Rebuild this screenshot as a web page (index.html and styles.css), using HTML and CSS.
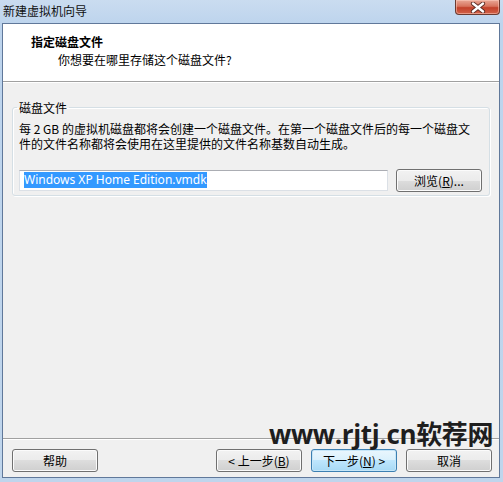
FILE: index.html
```html
<!DOCTYPE html>
<html lang="zh-CN">
<head>
<meta charset="utf-8">
<title>新建虚拟机向导</title>
<link rel="stylesheet" href="styles.css">
</head>
<body>
<div class="window">
  <div class="titlebar">
    <span class="title">新建虚拟机向导</span>
    <div class="close">
      <svg width="16" height="11" viewBox="0 0 16 11">
        <path d="M3 1.5 L13 9.5 M13 1.5 L3 9.5" stroke="#5a2a22" stroke-width="4.2" stroke-linecap="round"/>
        <path d="M3 1.5 L13 9.5 M13 1.5 L3 9.5" stroke="#ffffff" stroke-width="2.4" stroke-linecap="round"/>
      </svg>
    </div>
  </div>
  <div class="client">
    <div class="header">
      <div class="h-title">指定磁盘文件</div>
      <div class="h-sub">你想要在哪里存储这个磁盘文件?</div>
    </div>
    <div class="sep"></div>
    <div class="main">
      <fieldset class="group">
        <legend>磁盘文件</legend>
        <p class="desc"><span class="line">每 2 GB 的虚拟机磁盘都将会创建一个磁盘文件。在第一个磁盘文件后的每一个磁盘文</span><span class="line">件的文件名称都将会使用在这里提供的文件名称基数自动生成。</span></p>
        <div class="file-row">
          <div class="textbox"><span class="sel">Windows XP Home Edition.vmdk</span></div>
          <div class="btn">浏览(<u>R</u>)...</div>
        </div>
      </fieldset>
    </div>
    <div class="sep"></div>
    <div class="footer">
      <div class="btn">帮助</div>
      <div class="spacer"></div>
      <div class="btn">&lt; 上一步(<u>B</u>)</div>
      <div class="btn default">下一步(<u>N</u>) &gt;</div>
      <div class="btn">取消</div>
    </div>
  </div>
  <div class="watermark">www.rjtj.cn软荐网</div>
</div>
</body>
</html>
```
FILE: styles.css
```css
html, body {
  margin: 0;
  padding: 0;
}
body {
  width: 503px;
  height: 482px;
  overflow: hidden;
  background: #bfd5ec;
  font-family: "Noto Sans CJK SC", "Noto Sans", sans-serif;
  font-size: 12px;
  color: #000;
}
.window {
  position: relative;
  width: 503px;
  height: 482px;
  display: flex;
  flex-direction: column;
  background: linear-gradient(#cadcf0 0px, #bdd4ed 24px, #bfd5ec 100%);
}
.titlebar {
  height: 23px;
  display: flex;
  justify-content: space-between;
  align-items: flex-start;
  padding-left: 3px;
}
.title {
  line-height: 22px;
  font-size: 12px;
  color: #111;
}
.close {
  width: 43px;
  height: 14px;
  margin-right: 3px;
  border: 1px solid #6b3a30;
  border-top: none;
  border-radius: 0 0 4px 4px;
  background: linear-gradient(#e9a896 0%, #d7735d 45%, #c2412a 55%, #d26249 100%);
  box-shadow: inset 0 0 0 1px rgba(255, 210, 195, 0.5);
  display: flex;
  align-items: center;
  justify-content: center;
}
.close svg {
  display: block;
}
.client {
  flex: 1;
  margin: 0 3px 4px 2px;
  border: 1px solid #60789a;
  background: #f0f0f0;
  display: flex;
  flex-direction: column;
}
.header {
  height: 57px;
  box-sizing: border-box;
  background: #fff;
  padding: 10px 0 0 28px;
  line-height: 15px;
}
.h-title {
  font-weight: bold;
}
.h-sub {
  margin-top: 3px;
  padding-left: 27px;
}
.sep {
  height: 0;
  border-top: 1px solid #a0a0a0;
  border-bottom: 1px solid #ffffff;
}
.main {
  flex: 1;
  padding-top: 17px;
}
.group {
  margin: 0 9px;
  padding: 6px 7px 3px 6px;
  border: 1px solid #d5dfe5;
  border-radius: 3px;
  box-shadow: inset 1px 1px 0 #fff, 1px 1px 0 #fff;
  line-height: 15px;
}
.group legend {
  padding: 0 2px;
  margin-left: -2px;
  line-height: 15px;
}
.desc {
  margin: 0;
  line-height: 15px;
}
.desc .line {
  display: block;
  height: 15px;
  white-space: nowrap;
}
.file-row {
  margin-top: 18px;
  display: flex;
  align-items: center;
  gap: 8px;
}
.textbox {
  width: 369px;
  height: 21px;
  box-sizing: border-box;
  border: 1px solid #dbe0e6;
  border-top-color: #abadb3;
  background: #fff;
  padding: 1px 0 0 4px;
}
.sel {
  display: inline-block;
  background: #3399ff;
  color: #fff;
  font-family: "Noto Sans", "Noto Sans CJK SC", sans-serif;
  font-size: 12px;
  line-height: 16px;
  vertical-align: top;
}
.btn {
  width: 86px;
  height: 23px;
  box-sizing: border-box;
  border: 1px solid #707070;
  border-radius: 3px;
  background: linear-gradient(#f2f2f2 0%, #ebebeb 50%, #dddddd 50%, #cfcfcf 100%);
  box-shadow: inset 0 0 0 1px #fbfbfb;
  display: flex;
  align-items: center;
  justify-content: center;
  line-height: 15px;
  color: #000;
  flex: none;
}
.btn u {
  text-decoration: underline;
  text-underline-offset: 1px;
}
.btn.default {
  border-color: #3c7fb1;
  background: linear-gradient(#eaf6fd 0%, #d9f0fc 50%, #bee6fd 50%, #a7d9f5 100%);
  box-shadow: inset 0 0 0 1px #c6e6f8;
}
.footer {
  height: 37px;
  box-sizing: border-box;
  padding: 9px 7px 0 9px;
  display: flex;
  align-items: flex-start;
  gap: 9px;
}
.spacer {
  flex: 1;
}
.watermark {
  position: absolute;
  left: 269px;
  top: 421px;
  font-family: "Open Sans", "Noto Sans CJK SC", sans-serif;
  font-weight: bold;
  font-size: 26px;
  line-height: 26px;
  color: #1e1e1e;
  white-space: nowrap;
  letter-spacing: -0.35px;
}
```
